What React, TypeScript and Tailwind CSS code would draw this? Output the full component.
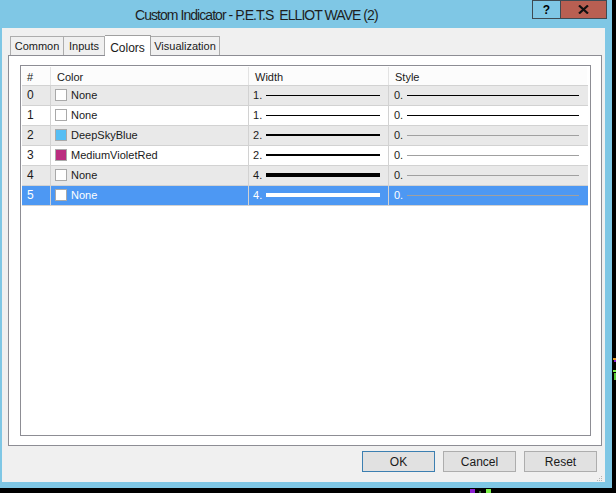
import React from 'react';

type Row = {
    id: number;
    name: string;
    swatch: string;
    width: number;
    thick: number;
    styleDark: boolean;
};

const rows: Row[] = [
    { id: 0, name: 'None', swatch: '#ffffff', width: 1, thick: 1, styleDark: true },
    { id: 1, name: 'None', swatch: '#ffffff', width: 1, thick: 1, styleDark: true },
    { id: 2, name: 'DeepSkyBlue', swatch: '#55bef4', width: 2, thick: 2, styleDark: false },
    { id: 3, name: 'MediumVioletRed', swatch: '#bb2d80', width: 2, thick: 2, styleDark: false },
    { id: 4, name: 'None', swatch: '#ffffff', width: 4, thick: 4, styleDark: false },
    { id: 5, name: 'None', swatch: '#ffffff', width: 4, thick: 4, styleDark: false },
];

const App: React.FC = () => {
    return (
        <div className="relative w-[616px] h-[493px] bg-black overflow-hidden" style={{ fontFamily: '"Liberation Sans", Arial, sans-serif' }}>
            <div className="w-[612px] h-[488px] bg-[#7fc7e5] flex flex-col">
                {/* Title bar */}
                <div className="h-[28px] flex items-start shrink-0">
                    <div className="pl-[135px] pt-[5px] text-[14px] text-[#1e1e1e] tracking-[-0.95px] whitespace-pre flex-1">
                        Custom Indicator - P.E.T.S  ELLIOT WAVE (2)
                    </div>
                    <div className="flex mr-[5px]">
                        <div className="w-[28px] h-[19px] border border-[#3e4a52] border-r-0 flex items-center justify-center text-[12px] font-bold text-black">?</div>
                        <div className="w-[47px] h-[19px] border border-[#3e4a52] bg-[#b95f52] flex items-center justify-center">
                            <svg width="11" height="9" viewBox="0 0 11 9">
                                <path d="M1 0.5 L10 8.5 M10 0.5 L1 8.5" stroke="#111" strokeWidth="2.2" />
                            </svg>
                        </div>
                    </div>
                </div>

                {/* Body */}
                <div className="ml-[2px] mr-[7px] h-[454px] bg-[#f0f0f0] flex flex-col text-[11px] text-[#1a1a1a]">
                    {/* Tabs */}
                    <div className="flex items-end h-[27px] pl-[8px] text-[11px]">
                        <div className="w-[54px] h-[19px] border border-[#adadad] border-b-0 flex items-center justify-center pt-px">Common</div>
                        <div className="w-[41px] h-[19px] border border-[#adadad] border-b-0 border-l-0 flex items-center justify-center pt-px">Inputs</div>
                        <div className="w-[46px] h-[21px] bg-white border border-[#a0a0a0] border-b-0 border-l-0 -mb-px z-10 flex items-start justify-center pt-[3px] text-[12px]">Colors</div>
                        <div className="w-[69px] h-[19px] border border-[#adadad] border-b-0 border-l-0 flex items-center justify-center pt-px">Visualization</div>
                    </div>

                    {/* Tab panel */}
                    <div className="ml-[6px] mr-[3px] h-[393px] bg-white border border-[#8d8d94] pt-[9px] pl-[11px] pr-[10px]">
                        <div className="h-[371px] border border-[#8d8d94] p-px">
                            {/* Header */}
                            <div className="flex h-[18px] text-[11px]">
                                <div className="w-[29px] bg-[#fcfcfc] border-r border-[#e3e3e3] pl-[5px] pt-[2px]">#</div>
                                <div className="w-[198px] bg-[#fcfcfc] border-r border-[#e3e3e3] pl-[6px] pt-[2px]">Color</div>
                                <div className="w-[140px] bg-[#fcfcfc] border-r border-[#e3e3e3] pl-[6px] pt-[2px]">Width</div>
                                <div className="w-[198px] bg-[#fcfcfc] pl-[6px] pt-[2px]">Style</div>
                            </div>
                            {rows.map(r => {
                                const sel = r.id === 5;
                                const bg = sel ? 'bg-[#4d98f3]' : r.id % 2 === 0 ? 'bg-[#e9e9e9]' : 'bg-white';
                                const txt = sel ? 'text-white' : 'text-[#1a1a1a]';
                                return (
                                    <div key={r.id} className={`flex h-[20px] w-[566px] border-t border-[#d2d2d2] ${bg} ${txt}`}>
                                        <div className="w-[29px] border-r border-[#d2d2d2] pl-[5px] flex items-center text-[12px]">{r.id}</div>
                                        <div className="w-[198px] border-r border-[#d2d2d2] pl-[4px] flex items-center gap-[4px]">
                                            <div className="w-[12px] h-[12px] border border-[#a9a9a9]" style={{ backgroundColor: r.swatch }} />
                                            <span>{r.name}</span>
                                        </div>
                                        <div className="w-[140px] border-r border-[#d2d2d2] pl-[4px] flex items-center gap-[4px]">
                                            <span className="w-[9px]">{r.width}.</span>
                                            <div className={`w-[114px] ${sel ? 'bg-white' : 'bg-black'}`} style={{ height: r.thick }} />
                                        </div>
                                        <div className="w-[198px] pl-[5px] flex items-center gap-[5px]">
                                            <span className="w-[8px]">0.</span>
                                            <div className={`w-[172px] h-px ${r.styleDark ? 'bg-black' : 'bg-[#a0a0a0]'}`} />
                                        </div>
                                    </div>
                                );
                            })}
                            <div className="w-[566px] border-t border-[#d2d2d2]" />
                        </div>
                    </div>

                    {/* Buttons */}
                    <div className="flex justify-end gap-[8px] mt-[5px] pr-[8px] text-[12px]">
                        <div className="w-[73px] h-[21px] bg-[#e1e1e1] border border-[#3c7fb1] flex items-center justify-center">OK</div>
                        <div className="w-[73px] h-[21px] bg-[#e1e1e1] border border-[#adadad] flex items-center justify-center">Cancel</div>
                        <div className="w-[73px] h-[21px] bg-[#e1e1e1] border border-[#adadad] flex items-center justify-center">Reset</div>
                    </div>
                    <div className="flex justify-end pr-[2px] mt-[4px]">
                        <svg width="6" height="6" viewBox="0 0 6 6">
                            <rect x="4" y="0" width="1" height="1" fill="#b5b5b5" />
                            <rect x="2" y="2" width="1" height="1" fill="#b5b5b5" />
                            <rect x="4" y="2" width="1" height="1" fill="#b5b5b5" />
                            <rect x="0" y="4" width="1" height="1" fill="#b5b5b5" />
                            <rect x="2" y="4" width="1" height="1" fill="#b5b5b5" />
                            <rect x="4" y="4" width="1" height="1" fill="#b5b5b5" />
                        </svg>
                    </div>
                </div>
            </div>

            {/* stray chart pixels behind the dialog */}
            <div className="absolute left-[470px] top-[489px] w-[5px] h-[4px] bg-[#8a1fd0]" />
            <div className="absolute left-[479px] top-[491px] w-[2px] h-[2px] bg-[#2f6b2f]" />
            <div className="absolute left-[486px] top-[489px] w-[5px] h-[4px] bg-[#7cf04a]" />
            <div className="absolute left-[613px] top-[358px] w-[3px] h-[2px] bg-[#e49a2a]" />
            <div className="absolute left-[614px] top-[360px] w-[2px] h-[2px] bg-[#8a1fd0]" />
            <div className="absolute left-[613px] top-[370px] w-[3px] h-[2px] bg-[#7cf04a]" />
            <div className="absolute left-[614px] top-[373px] w-[2px] h-[7px] bg-[#5ac83a]" />
        </div>
    );
};

export default App;
